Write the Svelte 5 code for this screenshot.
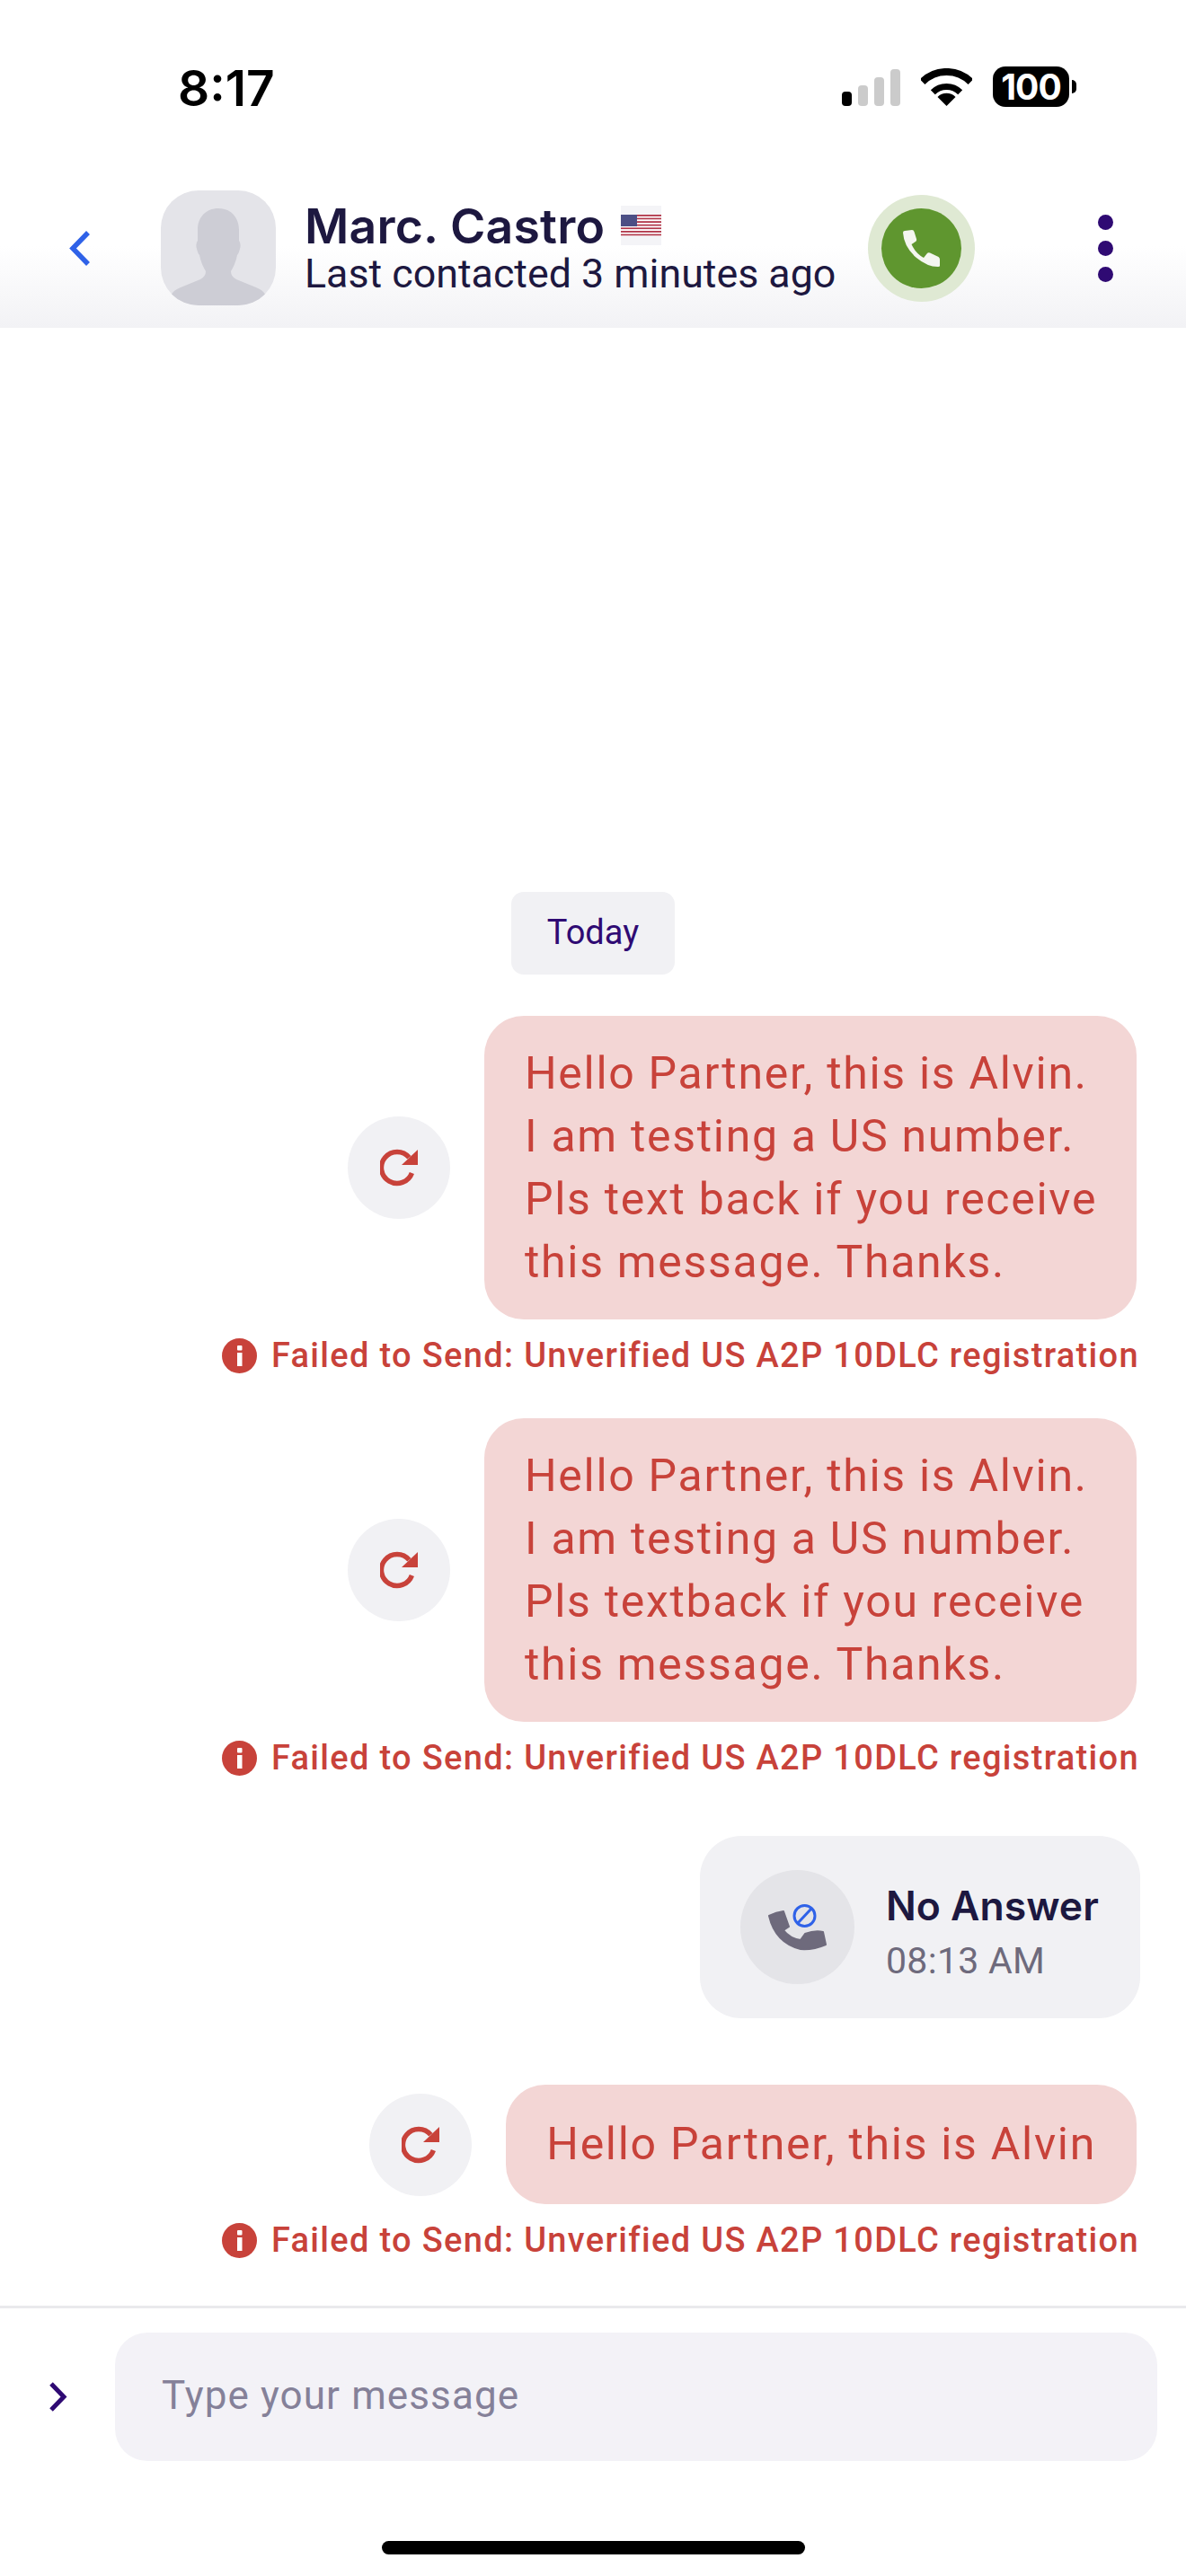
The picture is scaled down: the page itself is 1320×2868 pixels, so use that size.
<script>
	const failed = 'Failed to Send: Unverified US A2P 10DLC registration';
	const first = ['Hello Partner, this is Alvin.', 'I am testing a US number.', 'Pls text back if you receive', 'this message. Thanks.'];
	const second = ['Hello Partner, this is Alvin.', 'I am testing a US number.', 'Pls textback if you receive', 'this message. Thanks.'];
	const stripes = [0, 1, 2, 3, 4, 5, 6];
</script>

{#snippet retry()}
	<button class="retry" aria-label="Retry">
		<svg width="42" height="42" viewBox="0 0 42 42">
			<path d="M35.4 27A17.5 17.5 0 1 1 32.4 9.8" fill="none" stroke="#c8423a" stroke-width="5.5" />
			<path d="M42 1V18H24Z" fill="#c8423a" />
		</svg>
	</button>
{/snippet}

{#snippet error()}
	<div class="error">
		<svg width="39" height="39" viewBox="0 0 39 39">
			<circle cx="19.5" cy="19.5" r="19.5" fill="#c8423a" />
			<rect x="17" y="8" width="5.5" height="5.5" rx="1" fill="#fff" />
			<rect x="17" y="16" width="5.5" height="15" fill="#fff" />
		</svg>
		<span>{failed}</span>
	</div>
{/snippet}

<div class="page">
	<div class="status">
		<span class="time">8:17</span>
		<div class="status-icons">
			<div class="signal">
				<i class="on"></i>
				<i style="height: 23px"></i>
				<i style="height: 32px"></i>
				<i style="height: 41px"></i>
			</div>
			<svg class="wifi" width="57" height="42" viewBox="0 0 57 42">
				<path d="M1.6 15.1A38 38 0 0 1 55.4 15.1" fill="none" stroke="#000" stroke-width="8" />
				<path d="M13.3 26.8A21.5 21.5 0 0 1 43.7 26.8" fill="none" stroke="#000" stroke-width="7" />
				<path d="M28.5 42L18.5 32A14 14 0 0 1 38.5 32Z" />
			</svg>
			<div class="battery"><span>100</span></div>
			<i class="nub"></i>
		</div>
	</div>

	<header>
		<svg class="back" width="24" height="39" viewBox="0 0 24 39">
			<path d="M21 2L4 19.5L21 37" fill="none" stroke="#2f62e8" stroke-width="5.5" />
		</svg>
		<div class="avatar">
			<svg width="128" height="128" viewBox="0 0 128 128">
				<path
					d="M64 20C50 20 41 30 41 44L41 56Q39 58 39.5 63Q41 70 43 72Q45 82 50 90Q50 96 44 99L22 108Q14 111 12 116Q20 128 36 128L92 128Q108 128 116 116Q114 111 106 108L84 99Q78 96 78 90Q83 82 85 72Q87 70 88.5 63Q89 58 87 56L87 44C87 30 78 20 64 20Z"
					fill="#cdcdd5"
				/>
			</svg>
		</div>
		<div class="who">
			<div class="name">
				<span>Marc. Castro</span>
				<div class="flag">
					<svg width="45" height="24" viewBox="0 0 45 24">
						{#each stripes as s}
							<rect y={s * 3.6} width="45" height="1.9" fill="#b2374a" />
							<rect y={s * 3.6 + 1.9} width="45" height="1.7" fill="#fff" />
						{/each}
						<rect width="18" height="13" fill="#4c4f85" />
					</svg>
				</div>
			</div>
			<div class="contacted">Last contacted 3 minutes ago</div>
		</div>
		<button class="call" aria-label="Call">
			<svg width="41" height="41" viewBox="0 0 41 41">
				<path
					d="M2 1L10 0Q12 0 12.5 2L15 10Q15.5 12 14 13L9.5 16Q14 26 23 31L27 26Q28 25 30 25.5L39.5 30Q41 31 41 33L41 40Q41 41 39 41Q27 41 15 31Q1 19 0 3Q0 1 2 1Z"
					fill="#f4f6f0"
				/>
			</svg>
		</button>
		<div class="more"><i></i><i></i><i></i></div>
	</header>

	<main>
		<div class="today">Today</div>

		<div class="row">
			{@render retry()}
			<div class="bubble wide">
				{#each first as line}<div>{line}</div>{/each}
			</div>
		</div>
		{@render error()}

		<div class="row second">
			{@render retry()}
			<div class="bubble wide">
				{#each second as line}<div>{line}</div>{/each}
			</div>
		</div>
		{@render error()}

		<div class="missed">
			<div class="missed-icon">
				<svg width="66" height="52" viewBox="0 0 66 52">
					<path
						d="M1 13Q9 9 17 8L23 25L17 29Q24 38 36 40L41 33Q52 29 61 31L64 45Q50 51 36 50Q8 43 1 13Z"
						fill="#6e6a7c"
						stroke="#6e6a7c"
						stroke-width="2"
						stroke-linejoin="round"
					/>
					<circle cx="40.5" cy="13" r="11.5" fill="none" stroke="#2f62e8" stroke-width="3" />
					<path d="M33 21L48 5" stroke="#2f62e8" stroke-width="3" />
				</svg>
			</div>
			<div class="missed-text">
				<div class="missed-title">No Answer</div>
				<div class="missed-time">08:13 AM</div>
			</div>
		</div>

		<div class="row third">
			{@render retry()}
			<div class="bubble">Hello Partner, this is Alvin</div>
		</div>
		{@render error()}
	</main>

	<footer>
		<svg width="21" height="33" viewBox="0 0 21 33">
			<path d="M3 2L17 16.5L3 31" fill="none" stroke="#2f0a73" stroke-width="5" />
		</svg>
		<div class="input">Type your message</div>
	</footer>
	<div class="home"><i></i></div>
</div>

<style>
	:global(body) {
		background: #fff;
	}

	.page {
		display: flex;
		flex-direction: column;
		width: 1320px;
		height: 2868px;
		overflow: hidden;
		background: #fff;
		font-family: Roboto, sans-serif;
	}

	.status {
		display: flex;
		flex: none;
		align-items: flex-start;
		justify-content: space-between;
		height: 190px;
		padding: 74px 122px 0 198px;
		box-sizing: border-box;
	}

	.time {
		color: #000;
		font-family: Inter, sans-serif;
		font-size: 55px;
		font-weight: 600;
		line-height: 48px;
	}

	.status-icons {
		display: flex;
		align-items: center;
	}

	.signal {
		display: flex;
		align-items: flex-end;
		gap: 7px;
		height: 41px;
		margin-top: 1px;
	}

	.signal i {
		display: block;
		width: 11px;
		border-radius: 4px;
		background: #cbcbcb;
	}

	.signal i.on {
		height: 16px;
		background: #000;
	}

	.wifi {
		margin-left: 23px;
	}

	.battery {
		display: flex;
		align-items: center;
		justify-content: center;
		width: 85px;
		height: 45px;
		margin-left: 23px;
		border-radius: 14px;
		background: #000;
		color: #fff;
		font-family: Inter, sans-serif;
		font-size: 39px;
		font-weight: 700;
		letter-spacing: -1px;
	}

	.nub {
		display: block;
		width: 5px;
		height: 15px;
		margin-left: 3px;
		border-radius: 0 8px 8px 0;
		background: #000;
	}

	header {
		display: flex;
		flex: none;
		align-items: center;
		height: 175px;
		padding: 0 0 3px 77px;
		box-sizing: border-box;
		background: linear-gradient(180deg, #fff 48%, #f2f2f5 100%);
	}

	.back {
		flex: none;
	}

	.avatar {
		flex: none;
		width: 128px;
		height: 128px;
		margin-left: 78px;
		overflow: hidden;
		border-radius: 42px;
		background: #e4e4e9;
	}

	.avatar svg {
		display: block;
	}

	.who {
		flex: none;
		width: 628px;
		padding-left: 32px;
		box-sizing: border-box;
		color: #1d1840;
	}

	.name {
		display: flex;
		align-items: center;
		gap: 18px;
		height: 58px;
		font-family: Inter, sans-serif;
		font-size: 53.5px;
		font-weight: 600;
		letter-spacing: 0.2px;
	}

	.flag {
		display: flex;
		align-items: center;
		width: 45px;
		height: 44px;
		background: #f4f4f7;
	}

	.contacted {
		font-size: 44.75px;
		line-height: 50px;
	}

	button {
		display: flex;
		align-items: center;
		justify-content: center;
		padding: 0;
		border: 0;
	}

	.call {
		flex: none;
		width: 89px;
		height: 89px;
		margin: 0 15px 0 46px;
		border-radius: 50%;
		background: #5f962f;
		box-shadow: 0 0 0 15px #dfe9d3;
	}

	.more {
		display: flex;
		flex: none;
		flex-direction: column;
		gap: 12px;
		margin-left: 137px;
	}

	.more i {
		display: block;
		width: 17px;
		height: 17px;
		border-radius: 50%;
		background: #2f0a73;
	}

	main {
		display: flex;
		flex: 1;
		flex-direction: column;
		align-items: flex-end;
		justify-content: flex-end;
		padding: 0 55px 53px 0;
	}

	.today {
		align-self: center;
		width: 182px;
		height: 92px;
		margin: 0 -55px 46px 0;
		border-radius: 14px;
		background: #f1f1f4;
		color: #2f0a73;
		font-size: 38px;
		line-height: 90px;
		text-align: center;
	}

	.row {
		display: flex;
		align-items: center;
		gap: 38px;
	}

	.row.second {
		margin-top: 50px;
	}

	.row.third {
		margin-top: 74px;
	}

	.retry {
		flex: none;
		width: 114px;
		height: 114px;
		border-radius: 50%;
		background: #f1f1f4;
	}

	.bubble {
		padding: 31px 45px 32px;
		border-radius: 44px;
		background: #f3d6d5;
		color: #c8423a;
		font-size: 50px;
		line-height: 70px;
		letter-spacing: 1.7px;
		white-space: nowrap;
	}

	.bubble.wide {
		width: 726px;
		padding: 29px 0 29px 45px;
		box-sizing: border-box;
	}

	.error {
		display: flex;
		align-items: center;
		gap: 16px;
		height: 40px;
		margin: 20px -3px 0 0;
		color: #c8423a;
		font-size: 38px;
		font-weight: 500;
		letter-spacing: 1.33px;
		white-space: nowrap;
	}

	.missed {
		display: flex;
		align-items: center;
		width: 490px;
		height: 203px;
		margin: 67px -4px 0 0;
		padding-left: 45px;
		box-sizing: border-box;
		border-radius: 46px;
		background: #f1f1f4;
	}

	.missed-icon {
		display: flex;
		align-items: center;
		justify-content: center;
		width: 127px;
		height: 127px;
		margin-right: 35px;
		border-radius: 50%;
		background: #e4e4e8;
	}

	.missed-text {
		padding-top: 10px;
	}

	.missed-title {
		color: #1d1840;
		font-family: Inter, sans-serif;
		font-size: 44.5px;
		font-weight: 600;
		line-height: 56px;
	}

	.missed-time {
		margin-top: 8px;
		color: #6e6a7c;
		font-size: 41px;
		letter-spacing: 0.3px;
		line-height: 50px;
	}

	footer {
		display: flex;
		flex: none;
		align-items: center;
		gap: 53px;
		height: 200px;
		padding: 0 32px 0 54px;
		box-sizing: border-box;
		border-top: 3px solid #e9e9ec;
	}

	.input {
		flex: 1;
		height: 143px;
		padding-left: 52px;
		border-radius: 36px;
		background: #f3f2f7;
		color: #858199;
		font-size: 44px;
		letter-spacing: 1.1px;
		line-height: 141px;
	}

	.home {
		display: flex;
		flex: none;
		justify-content: center;
		height: 101px;
		padding-top: 62px;
		box-sizing: border-box;
	}

	.home i {
		display: block;
		width: 471px;
		height: 15px;
		border-radius: 8px;
		background: #000;
	}
</style>
